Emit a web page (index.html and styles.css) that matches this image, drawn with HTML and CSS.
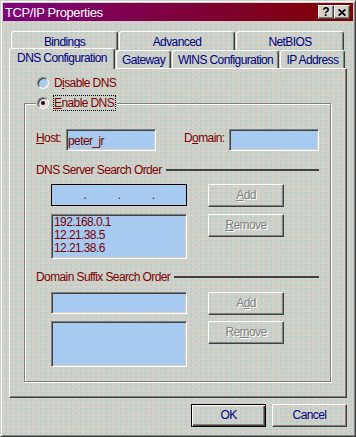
FILE: index.html
```html
<!DOCTYPE html>
<html lang="en">
<head>
    <meta charset="UTF-8">
    <title>TCP/IP Properties</title>
    <link rel="stylesheet" href="styles.css">
</head>
<body>
    <div class="window">
        <div class="titlebar">
            <span class="title">TCP/IP Properties</span>
            <div class="caption-buttons">
                <span class="cap-btn help">?</span>
                <span class="cap-btn close">
                    <svg width="8" height="7" viewBox="0 0 8 7"><path d="M0.6 0.4L7.4 6.6M7.4 0.4L0.6 6.6" stroke="#000" stroke-width="1.8"/></svg>
                </span>
            </div>
        </div>

        <div class="dialog">
            <div class="tab-row back">
                <div class="tab tab-bindings">Bindings</div>
                <div class="tab tab-advanced">Advanced</div>
                <div class="tab tab-netbios">NetBIOS</div>
            </div>
            <div class="tab-row front">
                <div class="tab tab-dns active">DNS Configuration</div>
                <div class="tab tab-gateway">Gateway</div>
                <div class="tab tab-wins">WINS Configuration</div>
                <div class="tab tab-ip">IP Address</div>
            </div>

            <div class="panel">
                <div class="radio-row">
                    <span class="radio"></span>
                    <span class="radio-label">D<u>i</u>sable DNS</span>
                </div>
                <div class="radio-row legend">
                    <span class="radio checked"></span>
                    <span class="radio-label focus"><u>E</u>nable DNS</span>
                </div>

                <div class="groupbox">
                    <div class="host-row">
                        <span class="lbl lbl-host"><u>H</u>ost:</span>
                        <div class="field host-field">peter_jr</div>
                        <span class="lbl lbl-domain">D<u>o</u>main:</span>
                        <div class="field domain-field"></div>
                    </div>

                    <div class="heading heading-dns">
                        <span>DNS Server Search Order</span>
                        <span class="rule"></span>
                    </div>
                    <div class="order-grid dns-grid">
                        <div class="ip-field">
                            <span></span><span class="dot">.</span>
                            <span></span><span class="dot">.</span>
                            <span></span><span class="dot">.</span>
                            <span></span>
                        </div>
                        <div class="btn disabled"><u>A</u>dd</div>
                        <div class="field list list-dns">
                            <div>192.168.0.1</div>
                            <div>12.21.38.5</div>
                            <div>12.21.38.6</div>
                        </div>
                        <div class="btn disabled"><u>R</u>emove</div>
                    </div>

                    <div class="heading heading-suffix">
                        <span>Domain Suffix Search Order</span>
                        <span class="rule"></span>
                    </div>
                    <div class="order-grid suffix-grid">
                        <div class="field suffix-field"></div>
                        <div class="btn disabled">A<u>d</u>d</div>
                        <div class="field list list-suffix"></div>
                        <div class="btn disabled">Re<u>m</u>ove</div>
                    </div>
                </div>
            </div>

            <div class="dialog-buttons">
                <div class="btn default">OK</div>
                <div class="btn">Cancel</div>
            </div>
        </div>
    </div>
</body>
</html>
```

FILE: styles.css
```css
:root {
    --face: #d4d0c8;
    --shadow: #808080;
    --dark: #404040;
    --field: #a6caf0;
    --maroon: #800000;
    --navy: #000080;
}

* {
    box-sizing: border-box;
}

html,
body {
    margin: 0;
    padding: 0;
}

body {
    background: var(--face);
    font-family: "Liberation Sans", Arial, sans-serif;
    font-size: 12px;
    letter-spacing: -0.6px;
    color: var(--maroon);
}

/* dotted face texture, shared so it lines up on every layer */
.window,
.legend,
.tab.active {
    background-color: var(--face);
    background-image:
        radial-gradient(circle at 1px 1px, #b2d0cc 0.7px, transparent 1px),
        radial-gradient(circle at 3px 3px, #bad4d0 0.7px, transparent 1px);
    background-size: 5px 4px, 7px 6px;
    background-attachment: fixed;
}

.window {
    width: 356px;
    height: 437px;
    border: 1px solid;
    border-color: var(--face) var(--dark) var(--dark) var(--face);
    box-shadow: inset 1px 1px #fff, inset -1px -1px var(--shadow);
    padding: 2px;
}

/* title bar */
.titlebar {
    height: 18px;
    display: flex;
    align-items: center;
    justify-content: space-between;
    padding: 0 3px 0 2px;
    background: linear-gradient(to right, #80047c, #7e0036 55%, #820000);
    color: #fff;
    font-size: 13px;
    letter-spacing: -0.4px;
}

.caption-buttons {
    display: flex;
}

.cap-btn {
    width: 16px;
    height: 14px;
    display: flex;
    align-items: center;
    justify-content: center;
    background: var(--face);
    border: 1px solid;
    border-color: #fff var(--dark) var(--dark) #fff;
    box-shadow: inset -1px -1px var(--shadow);
    color: #000;
    font-weight: bold;
    font-size: 12px;
    letter-spacing: 0;
}

.cap-btn.help {
    width: 16px;
    padding-bottom: 1px;
}

/* tabs */
.dialog {
    margin-top: 10px;
    padding-left: 6px;
}

.tab-row {
    display: flex;
    gap: 1px;
}

.tab-row.back {
    height: 19px;
    padding-left: 2px;
}

.tab-row.front {
    height: 18px;
    align-items: flex-end;
}

.tab {
    height: 100%;
    display: flex;
    align-items: center;
    justify-content: center;
    border: 1px solid;
    border-bottom: none;
    border-color: #fff var(--dark) transparent #fff;
    border-radius: 3px 3px 0 0;
    box-shadow: inset -1px 0 var(--shadow);
    color: var(--navy);
    padding-top: 1px;
}

.tab-bindings { width: 107px; }
.tab-advanced { width: 116px; }
.tab-netbios { width: 108px; }
.tab-dns { width: 106px; }
.tab-gateway { width: 55px; }
.tab-wins { width: 107px; }
.tab-ip { width: 65px; }

.tab.active {
    height: 21px;
    margin-bottom: -1px;
    padding-top: 0;
    padding-bottom: 2px;
    position: relative;
    z-index: 1;
}

/* property page */
.panel {
    width: 338px;
    height: 330px;
    border: 1px solid;
    border-color: #fff var(--dark) var(--dark) #fff;
    box-shadow: inset -1px -1px var(--shadow);
    padding: 6px 0 0 14px;
}

.radio-row {
    display: flex;
    align-items: center;
    gap: 4px;
    width: max-content;
    margin-left: 12px;
    padding: 0 1px;
}

.radio-row + .radio-row {
    margin-top: 4px;
}

.legend {
    position: relative;
    z-index: 1;
    background-attachment: fixed;
}

.radio {
    width: 12px;
    height: 12px;
    border-radius: 50%;
    border: 1px solid;
    border-color: var(--shadow) #fff #fff var(--shadow);
    box-shadow: inset 1px 1px var(--dark), inset -1px -1px var(--face);
    background: var(--field);
    display: flex;
    align-items: center;
    justify-content: center;
}

.radio.checked {
    background: #dde3ea;
}

.radio.checked::after {
    content: "";
    width: 4px;
    height: 4px;
    border-radius: 50%;
    background: #3a0000;
}

.radio-label {
    line-height: 14px;
    border: 1px solid transparent;
    padding-right: 1px;
}

.radio-label.focus {
    border: 1px dotted #000;
}

/* etched group box */
.groupbox {
    width: 307px;
    height: 279px;
    margin-top: -8px;
    border: 1px solid var(--shadow);
    box-shadow: inset 1px 1px #fff, 1px 1px #fff;
    padding: 25px 11px 0 11px;
}

.host-row {
    display: flex;
    align-items: center;
    height: 22px;
}

.lbl {
    padding-bottom: 4px;
}

.lbl-host {
    width: 30px;
}

.lbl-domain {
    width: 45px;
    margin-left: 28px;
}

.field {
    background: var(--field);
    border: 1px solid;
    border-color: var(--shadow) #fff #fff var(--shadow);
    box-shadow: inset 1px 1px var(--dark), inset -1px -1px var(--face);
}

.host-field,
.domain-field {
    width: 90px;
    height: 22px;
    padding: 2px 1px 0;
    line-height: 18px;
}

.heading {
    display: flex;
    align-items: center;
    gap: 4px;
    height: 14px;
    margin-top: 12px;
}

.heading .rule {
    flex: 1;
    height: 2px;
    background: var(--dark);
}

.heading-suffix {
    margin-top: 11px;
}

.order-grid {
    display: grid;
    grid-template-columns: 136px 76px;
    column-gap: 21px;
    row-gap: 7px;
    align-items: start;
    margin: 7px 0 0 15px;
}

.suffix-grid {
    row-gap: 6px;
    margin-top: 8px;
}

.ip-field {
    height: 22px;
    border: 1px solid #000;
    background: var(--field);
    display: grid;
    grid-template-columns: 1fr auto 1fr auto 1fr auto 1fr;
    align-items: center;
    line-height: 16px;
    padding-bottom: 1px;
}

.suffix-field {
    height: 22px;
}

.list {
    padding: 1px 2px;
    line-height: 13px;
}

.list-dns {
    height: 45px;
}

.list-suffix {
    height: 46px;
}

/* push buttons */
.btn {
    height: 23px;
    display: flex;
    align-items: center;
    justify-content: center;
    border: 1px solid;
    border-color: #fff var(--dark) var(--dark) #fff;
    box-shadow: inset -1px -1px var(--shadow);
    color: var(--navy);
    padding-bottom: 1px;
}

.btn.disabled {
    color: var(--shadow);
    text-shadow: 1px 1px 0 #fff;
}

.btn.default {
    border: 1px solid #000;
    box-shadow: inset 1px 1px #fff, inset -1px -1px var(--dark), inset -2px -2px var(--shadow);
}

.dialog-buttons {
    width: 338px;
    margin-top: 6px;
    display: flex;
    justify-content: flex-end;
    gap: 6px;
}

.dialog-buttons .btn {
    width: 75px;
}
```
